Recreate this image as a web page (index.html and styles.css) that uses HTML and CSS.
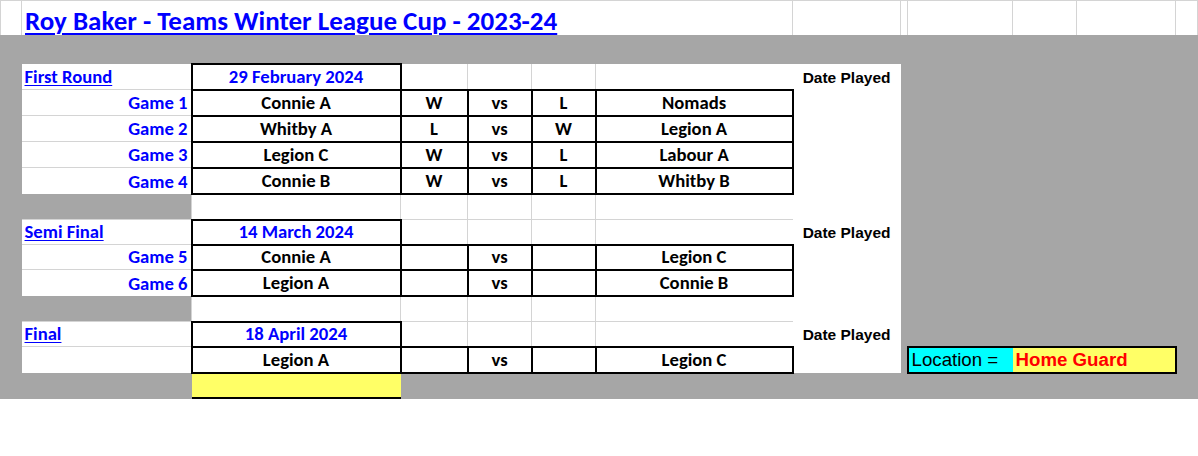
FILE: index.html
```html
<!DOCTYPE html>
<html lang="en">
<head>
<meta charset="utf-8">
<title>Roy Baker - Teams Winter League Cup - 2023-24</title>
<link rel="stylesheet" href="styles.css">
</head>
<body>
<table class="sheet">
  <colgroup>
    <col class="c-a"><col class="c-b"><col class="c-c"><col class="c-d"><col class="c-e"><col class="c-f"><col class="c-g"><col class="c-h"><col class="c-i"><col class="c-j"><col class="c-k"><col class="c-l"><col class="c-m">
  </colgroup>
  <tr class="r-title">
    <td class="grid head"></td>
    <td class="grid head title" colspan="6"><span class="title-text">Roy Baker - Teams Winter League Cup - 2023-24</span></td>
    <td class="grid head"></td><td class="grid head"></td><td class="grid head"></td><td class="grid head"></td><td class="grid head"></td><td class="grid head"></td>
  </tr>
  <tr class="r-gap"><td class="shade" colspan="13"></td></tr>

  <tr class="r26">
    <td class="shade" rowspan="13"></td>
    <td class="lbl round first">First Round</td>
    <td class="box date">29 February 2024</td>
    <td class="grid first"></td><td class="grid first"></td><td class="grid first"></td><td class="grid first gend"></td>
    <td class="played">Date Played</td>
    <td class="shade" rowspan="13"></td>
    <td class="shade" colspan="4" rowspan="11"></td>
  </tr>
  <tr class="r26">
    <td class="lbl game">Game 1</td>
    <td class="box">Connie A</td><td class="box">W</td><td class="box">vs</td><td class="box">L</td><td class="box">Nomads</td>
    <td class="played"></td>
  </tr>
  <tr class="r26">
    <td class="lbl game">Game 2</td>
    <td class="box">Whitby A</td><td class="box">L</td><td class="box">vs</td><td class="box">W</td><td class="box">Legion A</td>
    <td class="played"></td>
  </tr>
  <tr class="r26">
    <td class="lbl game">Game 3</td>
    <td class="box">Legion C</td><td class="box">W</td><td class="box">vs</td><td class="box">L</td><td class="box">Labour A</td>
    <td class="played"></td>
  </tr>
  <tr class="r26">
    <td class="lbl game last">Game 4</td>
    <td class="box">Connie B</td><td class="box">W</td><td class="box">vs</td><td class="box">L</td><td class="box">Whitby B</td>
    <td class="played"></td>
  </tr>
  <tr class="r26">
    <td class="shade"></td>
    <td class="grid"></td><td class="grid"></td><td class="grid"></td><td class="grid"></td><td class="grid gend"></td>
    <td class="played"></td>
  </tr>

  <tr class="r25">
    <td class="lbl round">Semi Final</td>
    <td class="box date">14 March 2024</td>
    <td class="grid"></td><td class="grid"></td><td class="grid"></td><td class="grid gend"></td>
    <td class="played">Date Played</td>
  </tr>
  <tr class="r25">
    <td class="lbl game">Game 5</td>
    <td class="box">Connie A</td><td class="box"></td><td class="box">vs</td><td class="box"></td><td class="box">Legion C</td>
    <td class="played"></td>
  </tr>
  <tr class="r26">
    <td class="lbl game last">Game 6</td>
    <td class="box">Legion A</td><td class="box"></td><td class="box">vs</td><td class="box"></td><td class="box">Connie B</td>
    <td class="played"></td>
  </tr>
  <tr class="r26">
    <td class="shade"></td>
    <td class="grid"></td><td class="grid"></td><td class="grid"></td><td class="grid"></td><td class="grid gend"></td>
    <td class="played"></td>
  </tr>

  <tr class="r25">
    <td class="lbl round">Final</td>
    <td class="box date">18 April 2024</td>
    <td class="grid"></td><td class="grid"></td><td class="grid"></td><td class="grid gend"></td>
    <td class="played">Date Played</td>
  </tr>
  <tr class="r26">
    <td class="lbl game last"></td>
    <td class="box">Legion A</td><td class="box"></td><td class="box">vs</td><td class="box"></td><td class="box">Legion C</td>
    <td class="played"></td>
    <td class="loc-key">Location =</td>
    <td class="loc-val" colspan="2">Home Guard</td>
    <td class="shade"></td>
  </tr>
  <tr class="r25">
    <td class="shade"></td>
    <td class="result"></td>
    <td class="shade" colspan="5"></td>
    <td class="shade" colspan="4"></td>
  </tr>
</table>
</body>
</html>
```

FILE: styles.css
```css
html, body {
  margin: 0;
  padding: 0;
  background: #fff;
}

body {
  font-family: "Carlito", "Lato", sans-serif;
  font-weight: 700;
  color: #000;
}

.sheet {
  border-collapse: collapse;
  table-layout: fixed;
  width: 1198px;
  background: #a6a6a6;
}

.c-a { width: 21px; }
.c-b { width: 170px; }
.c-c { width: 209px; }
.c-d { width: 67px; }
.c-e { width: 64px; }
.c-f { width: 64px; }
.c-g { width: 197px; }
.c-h { width: 108px; }
.c-i { width: 7px; }
.c-j { width: 105px; }
.c-k { width: 64px; }
.c-l { width: 99px; }
.c-m { width: 22px; }

.r-title { height: 34px; }
.r-gap { height: 29px; }
.r26 { height: 26px; }
.r25 { height: 25px; }

.sheet td {
  padding: 0 0 2px;
  vertical-align: bottom;
  white-space: nowrap;
  font-size: 18.67px;
  line-height: 20px;
}

.sheet .shade {
  background: #a6a6a6;
  border: none;
}

.sheet .grid {
  background: #fff;
  border: 1px solid #d4d4d4;
}

.sheet .head { border-bottom: none; }
.sheet .first { border-top: none; }
.sheet .gend { border-right: none; }

.sheet .title {
  padding: 0 0 0 3px;
  font-size: 27px;
  line-height: 29px;
  color: #0000ff;
}

.title-text {
  text-decoration: underline;
  text-decoration-thickness: 2px;
  text-underline-offset: 3px;
}

.sheet .box {
  background: #fff;
  border: 2px solid #000;
  text-align: center;
}

.sheet .date { color: #0000ff; }

.sheet .lbl {
  background: #fff;
  border: 1px solid #d4d4d4;
  border-left: none;
  color: #0000ff;
}

.sheet .lbl.first { border-top: none; }
.sheet .lbl.last { border-bottom: none; }

.sheet .round {
  padding-left: 3px;
  text-decoration: underline;
  text-underline-offset: 2px;
}

.sheet .game {
  text-align: right;
  padding-right: 3px;
}

.sheet .played {
  background: #fff;
  border: none;
  text-align: center;
  font-family: "Liberation Sans", Arial, sans-serif;
  font-size: 15.5px;
  padding-bottom: 2px;
}

.sheet .result {
  background: #ffff66;
  border: none;
  border-bottom: 2px solid #000;
}

.sheet .loc-key,
.sheet .loc-val {
  font-family: "Liberation Sans", Arial, sans-serif;
  font-size: 18.67px;
  line-height: 21px;
  padding: 0 0 2px 3px;
  border: 2px solid #000;
}

.sheet .loc-key {
  background: #00ffff;
  font-weight: 400;
  border-right: none;
}

.sheet .loc-val {
  background: #ffff66;
  color: #ff0000;
  border-left: none;
}
```
